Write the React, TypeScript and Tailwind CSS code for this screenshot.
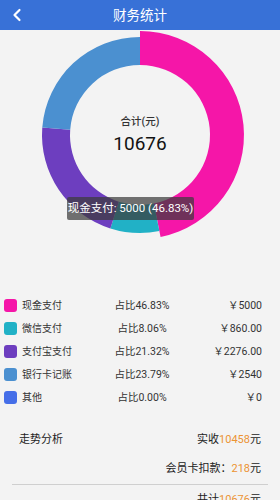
import React from "react";

const CX = 140;
const CY = 105;

function arc(r0: number, r1: number, a0: number, a1: number) {
  const p = (r: number, a: number) => {
    const rad = ((a - 90) * Math.PI) / 180;
    return `${(CX + r * Math.cos(rad)).toFixed(2)} ${(CY + r * Math.sin(rad)).toFixed(2)}`;
  };
  const large = a1 - a0 > 180 ? 1 : 0;
  return `M ${p(r1, a0)} A ${r1} ${r1} 0 ${large} 1 ${p(r1, a1)} L ${p(r0, a1)} A ${r0} ${r0} 0 ${large} 0 ${p(r0, a0)} Z`;
}

const data = [
  { name: "现金支付", pct: 46.83, pctText: "占比46.83%", amt: "￥5000", color: "#f516a8" },
  { name: "微信支付", pct: 8.06, pctText: "占比8.06%", amt: "￥860.00", color: "#21b1c6" },
  { name: "支付宝支付", pct: 21.32, pctText: "占比21.32%", amt: "￥2276.00", color: "#6d3ebf" },
  { name: "银行卡记账", pct: 23.79, pctText: "占比23.79%", amt: "￥2540", color: "#4b90d0" },
  { name: "其他", pct: 0, pctText: "占比0.00%", amt: "￥0", color: "#456ee8" },
];

export default function App() {
  let acc = 0;
  const segs = data
    .filter((d) => d.pct > 0)
    .map((d, i) => {
      const a0 = (acc / 100) * 360;
      acc += d.pct;
      const a1 = (acc / 100) * 360;
      return <path key={i} d={arc(70, i === 0 ? 104 : 98, a0, a1)} fill={d.color} />;
    });

  return (
    <div
      className="w-[280px] h-[500px] overflow-hidden bg-[#f3f3f3] text-[#222]"
      style={{ fontFamily: 'Roboto, "Noto Sans CJK SC", sans-serif' }}
    >
      <div className="h-[30px] bg-[#3871d7] relative flex items-center justify-center">
        <svg className="absolute left-[11px] top-[8px]" width="12" height="14" viewBox="0 0 12 14">
          <path d="M8.5 2 L3.5 7 L8.5 12" stroke="#fff" strokeWidth="2.2" fill="none" strokeLinecap="round" strokeLinejoin="round" />
        </svg>
        <span className="text-white text-[13.5px]">财务统计</span>
      </div>

      <div className="relative h-[264px]">
        <svg width="280" height="264" viewBox="0 0 280 264">
          {segs}
        </svg>
        <div className="absolute left-0 right-0 top-[85px] flex flex-col items-center">
          <span className="text-[10.5px] font-medium text-[#333] leading-[14px]">合计(元)</span>
          <span className="text-[19px] leading-[24px] mt-[3px] text-[#111]">10676</span>
        </div>
        <div className="absolute left-[67px] top-[167px] w-[127px] h-[23px] rounded-[2px] bg-[rgba(60,60,60,0.72)] flex items-center justify-center">
          <span className="text-white text-[11.5px] whitespace-nowrap">现金支付: 5000 (46.83%)</span>
        </div>
      </div>

      <div className="flex flex-col pl-[4px] pr-[18px]">
        {data.map((d) => (
          <div key={d.name} className="grid grid-cols-[98px_80px_1fr] h-[23px] items-center text-[10.5px] text-[#333]">
            <div className="flex items-center gap-[5px]">
              <span className="w-[13px] h-[13px] rounded-[3px] shrink-0" style={{ backgroundColor: d.color }} />
              <span className="text-[10px]">{d.name}</span>
            </div>
            <div className="text-center">{d.pctText}</div>
            <div className="text-right">{d.amt}</div>
          </div>
        ))}
      </div>

      <div className="mt-[23px] px-[19px] flex items-center justify-between h-[16px] text-[11px] text-[#222]">
        <span>走势分析</span>
        <span>
          实收<span className="text-[#ec9433]">10458</span>元
        </span>
      </div>
      <div className="mt-[13px] px-[19px] flex justify-end h-[16px] items-center text-[11px] text-[#222]">
        <span>
          会员卡扣款：<span className="text-[#ec9433]">218</span>元
        </span>
      </div>
      <div className="mx-[12px] mt-[7px] h-px bg-[#cfcfcf]" />
      <div className="mt-[7px] px-[19px] flex justify-end h-[16px] items-center text-[11px] text-[#222]">
        <span>
          共计<span className="text-[#ec9433]">10676</span>元
        </span>
      </div>
    </div>
  );
}
